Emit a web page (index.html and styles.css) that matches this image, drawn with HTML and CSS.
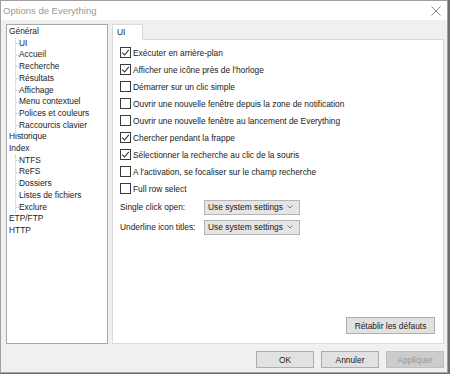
FILE: index.html
```html
<!DOCTYPE html>
<html lang="fr">
  <head>
    <meta charset="utf-8">
    <title>Options de Everything</title>
    <link rel="stylesheet" href="styles.css">
  </head>
  <body>
    <div class="window">
      <div class="titlebar">
        <span class="title">Options de Everything</span>
        <svg class="close" width="10" height="10" viewBox="0 0 10 10"><path d="M0.5 0.5 L9.5 9.5 M9.5 0.5 L0.5 9.5" stroke="#8a8a8a" stroke-width="1" fill="none"/></svg>
      </div>

      <div class="content">
        <div class="main">
          <!-- arbre des categories -->
          <ul class="tree">
            <li>Général
              <ul class="children">
                <li>UI</li>
                <li>Accueil</li>
                <li>Recherche</li>
                <li>Résultats</li>
                <li>Affichage</li>
                <li>Menu contextuel</li>
                <li>Polices et couleurs</li>
                <li>Raccourcis clavier</li>
              </ul>
            </li>
            <li>Historique</li>
            <li>Index
              <ul class="children">
                <li>NTFS</li>
                <li>ReFS</li>
                <li>Dossiers</li>
                <li>Listes de fichiers</li>
                <li>Exclure</li>
              </ul>
            </li>
            <li>ETP/FTP</li>
            <li>HTTP</li>
          </ul>

          <!-- onglet UI -->
          <div class="tabs">
            <div class="tabstrip"><span class="tab">UI</span></div>
            <div class="panel">
              <div class="checks">
                <div class="check on"><span class="box"></span>Exécuter en arrière-plan</div>
                <div class="check on"><span class="box"></span>Afficher une icône près de l'horloge</div>
                <div class="check"><span class="box"></span>Démarrer sur un clic simple</div>
                <div class="check"><span class="box"></span>Ouvrir une nouvelle fenêtre depuis la zone de notification</div>
                <div class="check"><span class="box"></span>Ouvrir une nouvelle fenêtre au lancement de Everything</div>
                <div class="check on"><span class="box"></span>Chercher pendant la frappe</div>
                <div class="check on"><span class="box"></span>Sélectionner la recherche au clic de la souris</div>
                <div class="check"><span class="box"></span>A l'activation, se focaliser sur le champ recherche</div>
                <div class="check"><span class="box"></span>Full row select</div>
              </div>
              <div class="field">
                <span class="field-label">Single click open:</span>
                <span class="select">Use system settings<svg width="6" height="4" viewBox="0 0 6 4"><path d="M0.5 0.5 L3 3 L5.5 0.5" stroke="#777" fill="none"/></svg></span>
              </div>
              <div class="field">
                <span class="field-label">Underline icon titles:</span>
                <span class="select">Use system settings<svg width="6" height="4" viewBox="0 0 6 4"><path d="M0.5 0.5 L3 3 L5.5 0.5" stroke="#777" fill="none"/></svg></span>
              </div>
              <div class="panel-foot">
                <button class="btn btn-wide">Rétablir les défauts</button>
              </div>
            </div>
          </div>
        </div>

        <div class="footer">
          <button class="btn">OK</button>
          <button class="btn">Annuler</button>
          <button class="btn" disabled>Appliquer</button>
        </div>
      </div>
    </div>
  </body>
</html>
```

FILE: styles.css
```css
* {
	margin:0;
	padding:0;
	box-sizing:border-box;
}

body {background:#6f6f6f;font-family:"Liberation Sans",Arial,sans-serif;font-size:8.4px;color:#222;}
ul, li {list-style:none;}

.window {width:448px;height:373px;border:1px solid #a0a0a0;background:#f0f0f0;display:flex;flex-direction:column;}

/* title bar */
.titlebar {height:19px;background:#fff;display:flex;align-items:center;justify-content:space-between;padding:0 6px 0 2px;}
.title {font-size:9.5px;color:#999;}

.content {flex:1;display:flex;flex-direction:column;padding:4px 3px 0 5px;}
.main {height:320px;display:flex;gap:4px;}

/* tree */
.tree {width:102px;border:1px solid #a8a8a8;background:#fff;padding:1px 2px;line-height:11.7px;}
.children {margin-left:6px;border-left:1px dotted #c4c4c4;}
.children li::before {content:"";display:inline-block;width:3px;border-top:1px dotted #c4c4c4;vertical-align:middle;}

/* tabs */
.tabs {width:332px;display:flex;flex-direction:column;}
.tabstrip {height:15px;display:flex;}
.tab {width:31px;height:16px;border:1px solid #d9d9d9;border-bottom:0;background:#fff;padding:2px 0 0 4px;z-index:1;}
.panel {flex:1;border:1px solid #d9d9d9;background:#fff;padding:4px 8px 9px 7px;display:flex;flex-direction:column;}

.check {height:17px;display:flex;align-items:center;gap:2px;}
.box {width:11px;height:11px;border:1px solid #3a3a3a;background:#fff;}
.check.on .box {background:#fff url("data:image/svg+xml,%3Csvg xmlns='http://www.w3.org/2000/svg' width='9' height='9'%3E%3Cpath d='M1.2 4.6 L3.6 7 L7.8 1.8' stroke='%23333' stroke-width='1.1' fill='none'/%3E%3C/svg%3E") no-repeat center;}

.field {height:20px;display:flex;align-items:center;}
.field-label {width:84px;}
.select {width:96px;height:15px;background:#e5e5e5;border:1px solid #b4b4b4;display:flex;align-items:center;justify-content:space-between;padding:0 6px 0 3px;}

.panel-foot {margin-top:auto;display:flex;justify-content:flex-end;}

/* buttons */
.btn {height:17px;width:58px;background:#e1e1e1;border:1px solid #adadad;font-family:inherit;font-size:8.4px;color:#222;}
.btn-wide {width:89px;}
.btn:disabled {background:#cccccc;border-color:#bfbfbf;color:#9a9a9a;}

.footer {display:flex;justify-content:flex-end;gap:7px;padding-top:7px;}
```
